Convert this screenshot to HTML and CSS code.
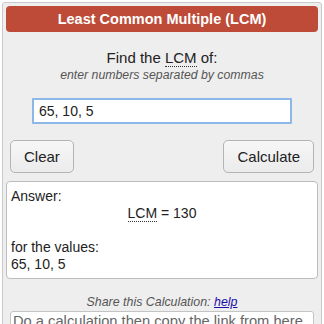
FILE: index.html
```html
<!DOCTYPE html>
<html lang="en">
  <head>
    <meta charset="UTF-8" />
    <meta name="viewport" content="width=device-width, initial-scale=1.0" />
    <title>Least Common Multiple (LCM) Calculator</title>
    <link rel="stylesheet" href="styles.css">
  </head>
  <body>
    <div class="calc">
      <div class="calc-title">Least Common Multiple (LCM)</div>

      <div class="calc-form">
        <p class="prompt">Find the <abbr title="Least Common Multiple">LCM</abbr> of:</p>
        <p class="hint">enter numbers separated by commas</p>
        <input type="text" class="numbers" value="65, 10, 5" />
        <div class="buttons">
          <button class="btn">Clear</button>
          <button class="btn">Calculate</button>
        </div>
      </div>

      <div class="answer">
        <p>Answer:</p>
        <p class="answer-result"><abbr title="Least Common Multiple">LCM</abbr> = 130</p>
        <p class="answer-values">for the values:<br />65, 10, 5</p>
      </div>

      <p class="share">Share this Calculation: <a href="#">help</a></p>
      <textarea class="share-link" rows="2">Do a calculation then copy the link from here.</textarea>
    </div>
  </body>
</html>
```

FILE: styles.css
```css
body {
  margin: 0;
  background-color: #fff;
  color: #222;
  font-family: "Liberation Sans", Arial, sans-serif;
}
p {
  margin: 0;
}
abbr {
  text-decoration: none;
  border-bottom: 1px dotted #333;
}
.calc {
  margin: 2px;
  width: 320px;
  height: 340px;
  box-sizing: border-box;
  padding: 3px;
  background-color: #eeeeee;
  border: 1px solid #c9c9c9;
  border-radius: 3px;
}
.calc-title {
  height: 26px;
  line-height: 26px;
  background-color: #bd4b37;
  border-radius: 4px;
  color: #fff;
  font-weight: bold;
  font-size: 14.5px;
  text-align: center;
}
.calc-form {
  display: flex;
  flex-direction: column;
  align-items: center;
  padding: 0 4px;
}
.prompt {
  margin-top: 17px;
  font-size: 15px;
  line-height: 18px;
}
.hint {
  font-size: 12.3px;
  line-height: 16px;
  font-style: italic;
  color: #555;
}
.numbers {
  margin-top: 15px;
  width: 260px;
  height: 26px;
  box-sizing: border-box;
  padding: 0 5px;
  border: 2px solid #8db6e9;
  border-radius: 1px;
  background-color: #fff;
  color: #222;
  font-family: inherit;
  font-size: 14px;
  outline: none;
}
.buttons {
  align-self: stretch;
  display: flex;
  justify-content: space-between;
  margin-top: 16px;
}
.btn {
  height: 33px;
  padding: 0 13px;
  border: 1px solid #b4b4b4;
  border-radius: 5px;
  background: linear-gradient(#f7f7f7, #ebebeb);
  color: #222;
  font-family: inherit;
  font-size: 15px;
}
.answer {
  margin-top: 8px;
  padding: 6px 4px 5px;
  background-color: #fff;
  border: 1px solid #bcbcbc;
  border-radius: 4px;
  font-size: 14px;
  line-height: 17px;
}
.answer-result {
  text-align: center;
}
.answer-values {
  margin-top: 17px;
}
.share {
  margin-top: 16px;
  text-align: center;
  font-size: 12.4px;
  line-height: 15px;
  font-style: italic;
  color: #555;
}
.share a {
  color: #1a0dab;
  text-decoration: underline;
}
.share-link {
  display: block;
  margin: 1px auto 0;
  width: 304px;
  height: 40px;
  box-sizing: border-box;
  padding: 1px 2px;
  border: 1px solid #c4c4c4;
  border-radius: 3px;
  background-color: #fff;
  color: #666;
  font-family: inherit;
  font-size: 14.7px;
  resize: none;
}
```
